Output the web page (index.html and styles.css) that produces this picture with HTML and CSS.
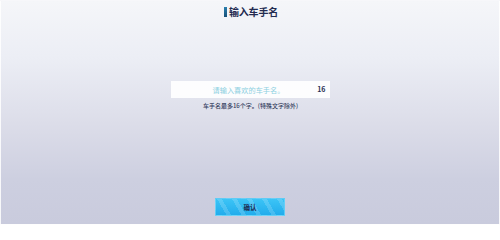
FILE: index.html
```html
<!DOCTYPE html>
<html lang="zh">
<head>
<meta charset="utf-8">
<link rel="stylesheet" href="styles.css">
</head>
<body>
<div class="page">
  <div class="title"><span class="title-bar"></span><span class="title-text">输入车手名</span></div>
  <div class="field">
    <span class="placeholder">请输入喜欢的车手名。</span>
    <span class="count">16</span>
  </div>
  <div class="hint">车手名最多16个字。(特殊文字除外)</div>
  <div class="spacer"></div>
  <div class="actions"><div class="btn">确认</div></div>
</div>
</body>
</html>
```
FILE: styles.css
```css
html, body {
  margin: 0;
  padding: 0;
}
body {
  width: 500px;
  height: 225px;
  overflow: hidden;
  font-family: "Noto Sans CJK SC", "Noto Sans", sans-serif;
}
.page {
  box-sizing: border-box;
  width: 500px;
  height: 225px;
  border: 1px solid rgba(255, 255, 255, 0.85);
  background: linear-gradient(180deg, #f5f6f9 0%, #eceef5 25%, #dcdde9 55%, #cdcfe0 80%, #c9cbdd 100%);
  display: flex;
  flex-direction: column;
  align-items: center;
}
.title {
  margin-top: 5px;
  height: 12px;
  display: flex;
  align-items: center;
  gap: 2px;
  padding-left: 2px;
}
.title-bar {
  width: 3px;
  height: 10px;
  background: linear-gradient(180deg, #2a7fae, #164f78);
}
.title-text {
  font-size: 10px;
  font-weight: 700;
  line-height: 12px;
  color: #232b50;
  letter-spacing: -0.2px;
}
.field {
  margin-top: 63px;
  width: 159px;
  height: 17px;
  box-sizing: border-box;
  background: rgba(255, 255, 255, 0.9);
  display: flex;
  align-items: center;
  justify-content: center;
  position: relative;
}
.placeholder {
  font-size: 7.2px;
  line-height: 10px;
  color: #8dd0e1;
  margin-right: 3px;
}
.count {
  position: absolute;
  right: 4px;
  top: 4px;
  font-size: 7px;
  line-height: 9px;
  font-weight: 700;
  color: #2a3252;
}
.hint {
  margin-top: 3px;
  font-size: 6px;
  line-height: 10px;
  font-weight: 500;
  color: #354060;
  padding-left: 1px;
}
.spacer {
  flex: 1;
}
.actions {
  margin-bottom: 8px;
}
.btn {
  width: 70px;
  height: 18px;
  box-sizing: border-box;
  background:
    repeating-linear-gradient(60deg, rgba(255, 255, 255, 0) 0px, rgba(255, 255, 255, 0) 9px, rgba(255, 255, 255, 0.16) 9px, rgba(255, 255, 255, 0.16) 13px),
    linear-gradient(180deg, #3cc4f6, #22acec);
  border: 1px solid rgba(120, 215, 250, 0.7);
  display: flex;
  align-items: center;
  justify-content: center;
  font-size: 6.5px;
  font-weight: 700;
  color: #1e2b52;
}
```
